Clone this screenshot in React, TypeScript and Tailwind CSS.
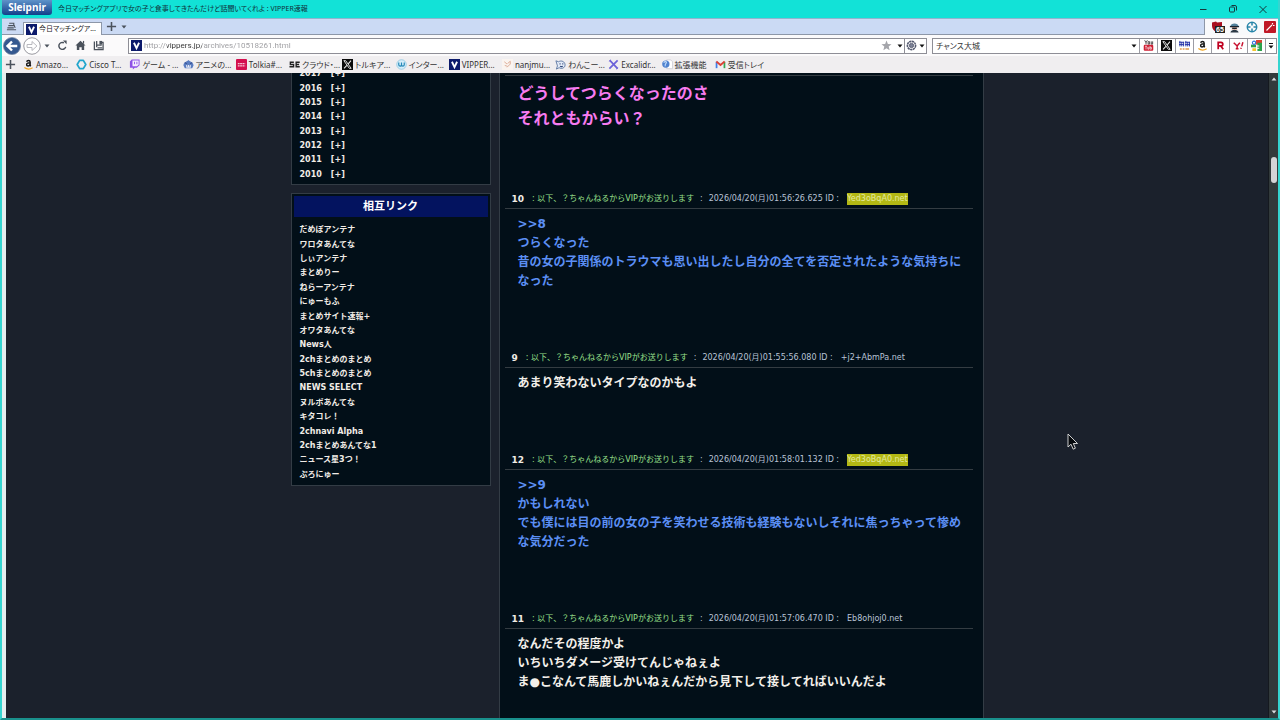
import type { ReactNode } from 'react';

const uiFont = "font-['Noto_Sans','Noto_Sans_CJK_JP',sans-serif] [font-feature-settings:'palt']";
const pageFont = "font-['DejaVu_Sans','Noto_Sans_CJK_JP',sans-serif]";

function Caret({ className = '' }: { className?: string }) {
  return (
    <svg viewBox="0 0 6 4" className={`h-1 w-1.5 shrink-0 ${className}`} aria-hidden="true">
      <path d="M0.5 0.5h5L3 3.6z" fill="currentColor" />
    </svg>
  );
}

function Glyph({ children, className = 'size-[11px]' }: { children: ReactNode; className?: string }) {
  return (
    <svg viewBox="0 0 12 12" className={`shrink-0 ${className}`} fill="none" aria-hidden="true">
      {children}
    </svg>
  );
}

function Plus() {
  return (
    <Glyph>
      <path d="M6 1v10M1 6h10" stroke="#4b525c" strokeWidth="1.7" />
    </Glyph>
  );
}

function VIcon() {
  return (
    <Glyph>
      <rect width="12" height="12" fill="#0c1a6b" />
      <path d="M3.2 3L6 8.8 8.800 3" stroke="#fff" strokeWidth="2" />
    </Glyph>
  );
}

function XIcon() {
  return (
    <Glyph>
      <rect width="12" height="12" fill="#0b0b0b" />
      <path d="M2 1.800h2l6 8.400H8z" stroke="#eee" strokeWidth="1" />
      <path d="M9.800 1.800L6.800 5.300M5.300 6.900L2.200 10.200" stroke="#eee" strokeWidth="1.100" />
    </Glyph>
  );
}

function AmazonIcon() {
  return (
    <Glyph>
      <path
        d="M4 3c.4-1.6 3.700-1.800 3.800.2V6.500c0 .6.300.9.700 1.300M7.700 4.200C5.500 4.100 4 4.700 4 6.200c0 1.900 2.800 1.800 3.600-.1"
        stroke="#161616"
        strokeWidth="1.6"
      />
      <path d="M1.500 9.300c2.700 2 6.300 2 9 .2" stroke="#f0a21c" strokeWidth="1.200" />
    </Glyph>
  );
}

const bookmarks: { label: string; icon: ReactNode }[] = [
  { label: 'Amazo...', icon: <AmazonIcon /> },
  {
    label: 'Cisco T...',
    icon: (
      <Glyph>
        <path d="M4 1.500h4L10.700 6 8 10.500H4L1.300 6z" stroke="#20a5cc" strokeWidth="1.900" strokeLinejoin="round" />
      </Glyph>
    ),
  },
  {
    label: 'ゲーム - ...',
    icon: (
      <Glyph>
        <path d="M3 .5h8.500v6.300L8.500 9.500H6.300L4.200 11.500v-2H1V2.800z" fill="#8e50e6" />
        <path d="M3.800 1.600h6.700v4.700L8.700 8H3.800z" fill="#f3ecff" />
        <path d="M6 3v2.700M8.600 3v2.700" stroke="#8e50e6" />
      </Glyph>
    ),
  },
  {
    label: 'アニメの...',
    icon: (
      <Glyph>
        <path d="M.5 7C.5 3.500 3.500 3 6 1c2 2 5.500 2.500 5.500 6L10 10H2z" fill="#5a7cc0" />
        <path d="M3.500 6.500h5v3h-5z" fill="#e8eefc" />
        <path d="M2 4l2 1M10 4L8 5M4.500 7.500h1M6.700 7.500h1" stroke="#263e80" />
      </Glyph>
    ),
  },
  {
    label: 'Tolkia#...',
    icon: (
      <Glyph>
        <rect width="12" height="12" rx="1" fill="#d4104f" />
        <path d="M2 5h8M2 7.500h8" stroke="#f7c6d6" strokeWidth="1.200" strokeDasharray="2 .5" />
      </Glyph>
    ),
  },
  {
    label: 'クラウド・...',
    icon: (
      <Glyph>
        <path d="M5.300 3.500H1.500V6H5v2.500H.5M11.700 3.500H7.800v5h3.900M7.300 6h3.700" stroke="#222" strokeWidth="1.500" />
      </Glyph>
    ),
  },
  { label: 'トルキア...', icon: <XIcon /> },
  {
    label: 'インター...',
    icon: (
      <Glyph>
        <circle cx="6" cy="6" r="5.200" fill="#d5eefa" stroke="#79bddd" strokeWidth=".7" />
        <path d="M3 3.800v2.500a1.500 1.500 0 003 0V3.800v2.500a1.500 1.500 0 003 0V3.800" stroke="#2689b8" strokeWidth="1.300" />
      </Glyph>
    ),
  },
  { label: 'VIPPER...', icon: <VIcon /> },
  {
    label: 'nanjmu...',
    icon: (
      <Glyph>
        <rect width="12" height="12" fill="#faf4f0" />
        <path d="M2.500 3l3 2.500M6 5l3-2.500v3L5.500 9M3 7l3 1" stroke="#dba993" strokeWidth="1" />
      </Glyph>
    ),
  },
  {
    label: 'わんこー...',
    icon: (
      <Glyph>
        <path d="M1 2l3 1c3-2 7 0 7 3.500S7 11 4.500 9.500L1.500 11l1.200-3.500z" fill="#e3ebf8" stroke="#5d77a2" strokeWidth="1" />
        <path d="M5.500 4.500v1.500M8.500 4.500v1.500M5.500 7.700c1 .8 2 .8 3 0" stroke="#2d4476" strokeWidth="1.100" />
      </Glyph>
    ),
  },
  {
    label: 'Excalidr...',
    icon: (
      <Glyph>
        <path d="M2 1.500L10.500 10.500M10.500 1.500L1.500 10.500" stroke="#6c63d9" strokeWidth="1.900" />
        <path d="M1 2.500l2-1.500M9 11l2-1.500" stroke="#6c63d9" />
      </Glyph>
    ),
  },
  {
    label: '拡張機能',
    icon: (
      <Glyph>
        <path d="M5 1h4.500l2 2v7.500H5z" fill="#fff" stroke="#c0c0c8" strokeWidth=".7" />
        <circle cx="4.200" cy="5.500" r="4" fill="#4f83cf" />
        <path d="M1.800 4c1.500-2 3.500-1 3 0S3 5.500 3.500 8" stroke="#c0dbfa" strokeWidth="1.200" />
      </Glyph>
    ),
  },
  {
    label: '受信トレイ',
    icon: (
      <Glyph>
        <path d="M1.700 10V3" stroke="#3f7fea" strokeWidth="1.900" />
        <path d="M10.300 10V3" stroke="#35a653" strokeWidth="1.900" />
        <path d="M1.500 2.800L6 6.500l4.500-3.700" stroke="#dd4236" strokeWidth="2" />
      </Glyph>
    ),
  },
];

const engines: { name: string; icon: ReactNode }[] = [
  {
    name: 'YouTube',
    icon: (
      <Glyph>
        <path d="M1.800.3L3.300 2.800v2M4.800.3L3.300 2.800M5.600 1.800v2.700h1.600V1.800zM9 1.500v3h1.500v-3" stroke="#333" strokeWidth=".9" />
        <rect x=".8" y="5.300" width="10.400" height="6.500" rx="1.200" fill="#cf1f34" />
        <path d="M2.300 6.800h2M3.300 6.800v3.500M5.300 7.500v2.500h1.200V7.500M7.700 6.500v3.500h1.500V8H7.700" stroke="#fff" strokeWidth=".7" />
      </Glyph>
    ),
  },
  { name: 'X', icon: <XIcon /> },
  {
    name: '価格.com',
    icon: (
      <Glyph>
        <path d="M0 2.500h5.500M0 5h5.500M1 1v6M3 2v5M5 2v5M6.500 2.500H12M6.500 5H12M7.500 1v6M9.500 2v5M11.500 2v5" stroke="#2330a5" strokeWidth="1" />
        <path d="M1 9.800h2M4 9.800h2M7 9.800h4" stroke="#e49a4b" strokeWidth="1.500" />
      </Glyph>
    ),
  },
  { name: 'Amazon', icon: <AmazonIcon /> },
  {
    name: '楽天',
    icon: (
      <Glyph>
        <path d="M3.500 10V2.500h3a1.800 1.800 0 010 4h-3M6.300 6.500L9 10" stroke="#bf0020" strokeWidth="1.900" />
      </Glyph>
    ),
  },
  {
    name: 'Yahoo!',
    icon: (
      <Glyph>
        <path d="M.8 3L4.500 6.500 7.500 3M4.500 6.500V9.500M3 9.500h3" stroke="#c8102e" strokeWidth="1.600" />
        <path d="M10.800 2.500L9.500 7M8.900 8.500l-.3 1.200" stroke="#c8102e" strokeWidth="1.600" />
      </Glyph>
    ),
  },
  {
    name: 'Google',
    icon: (
      <Glyph>
        <rect x="5.500" width="6.500" height="5" fill="#db3f31" />
        <rect x="7" y="3" width="5" height="9" fill="#2ba24c" />
        <path d="M0 5h5.500v3H0z" fill="#2ba24c" />
        <circle cx="3.300" cy="3" r="1.800" stroke="#3274dc" strokeWidth="1.200" />
        <path d="M1.500 9h4v3h-4z" fill="#f3c32f" />
        <path d="M6 6.500h3M6 9h3" stroke="#fff" strokeWidth="1.200" />
      </Glyph>
    ),
  },
];

const years = ['2017', '2016', '2015', '2014', '2013', '2012', '2011', '2010'];

const links = [
  'だめぽアンテナ', 'ワロタあんてな', 'しぃアンテナ', 'まとめりー', 'ねらーアンテナ', 'にゅーもふ',
  'まとめサイト速報+', 'オワタあんてな', 'News人', '2chまとめのまとめ', '5chまとめのまとめ', 'NEWS SELECT',
  'ヌルポあんてな', 'キタコレ！', '2chnavi Alpha', '2chまとめあんてな1', 'ニュース星3つ！', 'ぷろにゅー',
];

type Post = { no: string; date: string; id: string; marked?: boolean; lines: string[] };

const posts: Post[] = [
  {
    no: '10',
    date: '2026/04/20(月)01:56:26.625',
    id: 'Yed3oBqA0.net',
    marked: true,
    lines: ['>>8', 'つらくなった', '昔の女の子関係のトラウマも思い出したし自分の全てを否定されたような気持ちになった'],
  },
  { no: '9', date: '2026/04/20(月)01:55:56.080', id: '+j2+AbmPa.net', lines: ['あまり笑わないタイプなのかもよ'] },
  {
    no: '12',
    date: '2026/04/20(月)01:58:01.132',
    id: 'Yed3oBqA0.net',
    marked: true,
    lines: ['>>9', 'かもしれない', 'でも僕には目の前の女の子を笑わせる技術も経験もないしそれに焦っちゃって惨めな気分だった'],
  },
  {
    no: '11',
    date: '2026/04/20(月)01:57:06.470',
    id: 'Eb8ohjoj0.net',
    lines: ['なんだその程度かよ', 'いちいちダメージ受けてんじゃねぇよ', 'ま●こなんて馬鹿しかいねぇんだから見下して接してればいいんだよ'],
  },
];

function TitleBar() {
  return (
    <header className="flex h-[18px] shrink-0 items-center bg-[#12e2d7]">
      <div className="flex h-[15px] w-[50px] self-start items-center justify-center rounded-b-[3px] bg-linear-to-b from-[#5f93c9] to-[#12408a] pb-px font-['Noto_Sans',sans-serif] text-[10px] leading-none font-bold text-white">
        Sleipnir
      </div>
      <h1 className="ml-1.5 flex-1 truncate text-[7px] leading-4 text-[#10313a]">
        今日マッチングアプリで女の子と食事してきたんだけど話聞いてくれよ : VIPPER速報
      </h1>
      <div className="mr-[9px] flex gap-[18px] text-[#14393d]">
        <button type="button" aria-label="最小化">
          <Glyph className="size-3"><path d="M3 6.500h6.500" stroke="currentColor" /></Glyph>
        </button>
        <button type="button" aria-label="元に戻す">
          <Glyph className="size-3">
            <rect x="2.500" y="4" width="5" height="5" rx="1" stroke="currentColor" />
            <path d="M4.500 2.500h3.500a1.500 1.500 0 011.500 1.500v3.500" stroke="currentColor" />
          </Glyph>
        </button>
        <button type="button" aria-label="閉じる">
          <Glyph className="size-3"><path d="M2.500 3l7 7M9.500 3l-7 7" stroke="currentColor" /></Glyph>
        </button>
      </div>
    </header>
  );
}

function TabStrip() {
  return (
    <div className="flex h-[17px] shrink-0 border-t border-[#8fb5cf] bg-[#cbdaf4]">
      <div className="flex flex-1 items-end border-r border-b border-[#8d97a8]">
        <button type="button" aria-label="タブ一覧" className="mb-0.5 ml-1 w-[17px]">
          <Glyph>
            <path d="M3.500 2.500h5v2M2.500 5h6.500l1 2.500M1 9.500h10M1.500 7.500h7" stroke="#4b525c" strokeWidth="1.200" />
          </Glyph>
        </button>
        <div className="-mb-px flex h-[13px] w-[79px] items-center gap-0.5 border border-b-0 border-[#8d97a8] bg-white px-0.5 text-[7px] leading-3 text-[#222]">
          <VIcon />
          <span className="whitespace-nowrap">今日マッチングア...</span>
        </div>
        <button type="button" aria-label="新しいタブ" className="mb-0.5 ml-1"><Plus /></button>
        <button type="button" aria-label="タブメニュー" className="mb-[5px] ml-1 text-[#4b525c]"><Caret /></button>
      </div>
      <div className="flex w-[73px] items-center gap-[6px] bg-[#f8f9fb] pl-1.5">
        <div className="relative">
          <Glyph className="size-3">
            <path d="M1 1.500L5 .5l1 1 5-.5v5C10 9 8 10.500 6 11.500 3 10 1 8 1 5z" fill="#a80f20" />
          </Glyph>
          <span className="absolute top-[5px] left-1 bg-[#222] px-px font-['Liberation_Sans',sans-serif] text-[7px] leading-[7px] font-bold text-white">
            65
          </span>
        </div>
        <Glyph className="size-[11px]">
          <path d="M1.500 5C1.500.5 10.500.5 10.500 5z" fill="#53809a" />
          <path d="M3 5h6v3.500H3z" fill="#e8b3a0" />
          <path d="M1 5h10M3.500 7h5" stroke="#19242e" strokeWidth="1.500" />
          <path d="M1.500 11.500c1-4 8-4 9 0z" fill="#2c3945" />
        </Glyph>
        <Glyph className="size-3">
          <circle cx="6" cy="6" r="4.700" stroke="#2684a8" strokeWidth="1.500" />
          <path d="M6 2v2.500M6 7.500V10M2 6h2.500M7.500 6H10" stroke="#2684a8" strokeWidth="1.500" />
        </Glyph>
        <Glyph className="size-3">
          <rect width="12" height="12" rx="1" fill="#c01827" />
          <path d="M2.500 9.500L8 4M8.500 2v1.500M9 4.500h1.500" stroke="#fff" strokeWidth="1.200" />
        </Glyph>
      </div>
    </div>
  );
}

function NavBar() {
  return (
    <div className="flex h-[21px] shrink-0 items-center bg-[#fbfafb] pr-px pl-px">
      <div className="flex w-[125px] items-center text-[#4b525c]">
        <button type="button" aria-label="戻る">
          <Glyph className="size-[18px]">
            <circle cx="6" cy="6" r="5.700" fill="#34588f" stroke="#7587a3" strokeWidth=".5" />
            <path d="M9.500 6H3.300M6 3L3 6l3 3" stroke="#fff" strokeWidth="1.600" />
          </Glyph>
        </button>
        <button type="button" aria-label="進む" className="ml-0.5">
          <Glyph className="size-[18px]">
            <circle cx="6" cy="6" r="5.500" fill="#fff" stroke="#8d8d95" strokeWidth=".6" />
            <path d="M2.700 5h3.300V3L9.300 6 6 9V7H2.700z" stroke="#b1b1b8" strokeWidth=".6" />
          </Glyph>
        </button>
        <button type="button" aria-label="履歴" className="ml-[3px]"><Caret /></button>
        <button type="button" aria-label="更新" className="ml-[7px]">
          <Glyph>
            <path d="M9.500 7.500A3.800 3.800 0 117.500 3" stroke="currentColor" strokeWidth="1.600" />
            <path d="M6.500.5h4v4z" fill="currentColor" />
          </Glyph>
        </button>
        <button type="button" aria-label="ホーム" className="ml-[7px]">
          <Glyph>
            <path d="M6 .8L11.500 6H10v5H7.300V8H4.700v3H2V6H.5z" fill="currentColor" />
            <path d="M9.300 1v3" stroke="currentColor" strokeWidth="1.300" />
          </Glyph>
        </button>
        <button type="button" aria-label="お気に入り" className="ml-[7px]">
          <Glyph>
            <path d="M1.500 1.500v9h9.500V2.500H8M4 1v7M4 5.500h5.500M5 8.500h5" stroke="currentColor" strokeWidth="1.400" />
            <path d="M7 1h3v4H7z" fill="currentColor" />
          </Glyph>
        </button>
      </div>

      <div className="flex h-4 flex-1 items-center border border-[#8e8e96] bg-white pl-[2px]">
        <VIcon />
        <label className="ml-0.5 flex flex-1">
          <span className="sr-only">アドレス</span>
          <input
            className="h-[14px] w-full bg-[linear-gradient(to_right,#9a9a9e_23px,#333_23px,#333_58px,#9a9a9e_58px)] bg-clip-text font-['Roboto',sans-serif] text-[8px] leading-[14px] text-transparent caret-black outline-none"
            defaultValue="http://vippers.jp/archives/10518261.html"
          />
        </label>
        <button type="button" aria-label="ブックマークに追加">
          <Glyph>
            <path d="M6 .5l1.500 3.800 4 .2-3.100 2.600 1 4L6 8.900l-3.400 2.200 1-4L.5 4.500l4-.2z" fill="#a4a5aa" />
          </Glyph>
        </button>
        <button type="button" aria-label="アドレス履歴" className="ml-[5px] text-[#111]"><Caret /></button>
        <button type="button" aria-label="エンジン切替" className="ml-px flex h-full items-center gap-0.5 border-l border-[#8e8e96] pr-px pl-px text-[#111]">
          <Glyph>
            <circle cx="6" cy="6" r="4.500" stroke="#555a70" strokeWidth="1.700" strokeDasharray="2.500 .5" />
            <circle cx="6" cy="6" r="2.300" fill="#7c8296" stroke="#555a70" />
          </Glyph>
          <Caret />
        </button>
      </div>

      <div className="ml-[5px] flex h-4 w-[345px] items-center border border-[#8e8e96] bg-white">
        <label className="flex flex-1 pl-[3px]">
          <span className="sr-only">検索</span>
          <input className="h-[14px] w-full bg-transparent text-[8px] leading-[14px] text-[#333] outline-none" defaultValue="チャンス大城" />
        </label>
        <button type="button" aria-label="検索履歴" className="mr-0.5 text-[#111]"><Caret /></button>
        {engines.map((engine) => (
          <button
            key={engine.name}
            type="button"
            aria-label={engine.name}
            className="flex h-full w-[18px] items-center justify-center border-l border-[#9c9ca4]"
          >
            {engine.icon}
          </button>
        ))}
        <button type="button" aria-label="その他" className="flex h-full w-[11px] flex-col items-center justify-center gap-px border-l border-[#9c9ca4] text-[#111]">
          <span className="h-px w-1 bg-[#111]" />
          <Caret />
        </button>
      </div>
    </div>
  );
}

function BookmarkBar() {
  return (
    <nav className="flex h-[17px] shrink-0 items-center bg-[#f0eef0] pl-[3px] text-[8px] leading-3 text-[#333]">
      <button type="button" aria-label="ブックマークを追加" className="w-[18px]"><Plus /></button>
      <ul className="grid w-[745px] grid-cols-14">
        {bookmarks.map((b) => (
          <li key={b.label}>
            <a href="#" className="flex items-center gap-0.5 whitespace-nowrap">
              {b.icon}
              {b.label}
            </a>
          </li>
        ))}
      </ul>
    </nav>
  );
}

function Sidebar() {
  return (
    <aside className="flex w-[200px] shrink-0 flex-col gap-2 text-[8px] font-bold text-[#f1ece6]">
      <section className="border border-t-0 border-[#333c45] bg-[#020f18] px-2 pb-[2px]">
        <ul className="-mt-[6px] grid h-[115px] auto-rows-fr">
          {years.map((year) => (
            <li key={year} className="flex items-center gap-[9px] leading-3">
              {year}
              <a href="#">[+]</a>
            </li>
          ))}
        </ul>
      </section>
      <section className="border border-[#333c45] bg-[#020f18] p-0.5 pb-[3px]">
        <h2 className="flex h-[21px] items-center justify-center bg-[#03135f] text-[11px] leading-4 text-white">
          相互リンク
        </h2>
        <ul className="mt-[6px] grid h-[259px] auto-rows-fr pl-1.5">
          {links.map((link) => (
            <li key={link} className="flex items-center leading-3">
              <a href="#">{link}</a>
            </li>
          ))}
        </ul>
      </section>
    </aside>
  );
}

function PostItem({ post }: { post: Post }) {
  return (
    <article className="pb-[60px]">
      <header className="flex h-[17px] items-center border-b border-[#343c42] pb-0.5 pl-[7px] text-[8px] leading-3 whitespace-nowrap text-[#b9c3d6]">
        <b className="mr-2 text-[9px] text-[#f1ece6]">{post.no}</b>
        <span className="text-[#9be08c]">: 以下、？ちゃんねるからVIPがお送りします</span>
        <span className="mx-1.5">:</span>
        <span>{post.date} ID :</span>
        <span className={post.marked ? 'ml-2 bg-[#b3b814] text-[#e4e8a0]' : 'ml-2'}>{post.id}</span>
      </header>
      <div className={`pt-[6px] pl-[13px] text-[12px] leading-[19px] font-bold ${post.marked ? 'text-[#5c8ff5]' : 'text-[#f3efea]'}`}>
        {post.lines.map((line) => (
          <p key={line}>{line}</p>
        ))}
      </div>
    </article>
  );
}

function ScrollBar() {
  return (
    <div className="flex w-[10px] shrink-0 flex-col items-center border-l border-[#15191f] bg-[#323a3b] py-1 text-[#d9dadd]">
      <Caret className="rotate-180" />
      <div className="mt-[76px] h-[26px] w-1.5 rounded-full bg-[#d3d4d6]" />
      <Caret className="mt-auto" />
    </div>
  );
}

export default function App() {
  return (
    <div className={`flex h-screen flex-col overflow-hidden border-x-2 border-b-2 border-x-[#35d5d0] border-b-[#19908c] bg-[#12e2d7] ${uiFont}`}>
      <TitleBar />
      <TabStrip />
      <NavBar />
      <BookmarkBar />
      <div className="flex min-h-0 flex-1 border-l-4 border-[#e4edee] bg-[#1b212c]">
        <main className={`flex min-w-0 flex-1 justify-center gap-2 overflow-hidden [font-feature-settings:normal] ${pageFont}`}>
          <Sidebar />
          <div className="w-[485px] shrink-0 self-stretch border-x border-[#333c45] bg-[#020f18] pt-0.5 pr-2.5 pl-[5px]">
            <article className="border-t border-[#343c42] pt-[5px] pb-[61px] pl-[13px] text-[16px] leading-[25px] font-bold text-[#f77bf0]">
              <p>どうしてつらくなったのさ</p>
              <p>それともからい？</p>
            </article>
            {posts.map((post) => (
              <PostItem key={post.no} post={post} />
            ))}
          </div>
        </main>
        <ScrollBar />
      </div>
      <svg viewBox="0 0 12 18" className="pointer-events-none absolute top-[433px] left-[1067px] h-[18px] w-3" aria-hidden="true">
        <path d="M1 1v13l3-2.800 2.200 5 2.200-1L6.300 10.500h4.200z" fill="#05080c" stroke="#e2e2e2" strokeWidth=".9" />
      </svg>
    </div>
  );
}
